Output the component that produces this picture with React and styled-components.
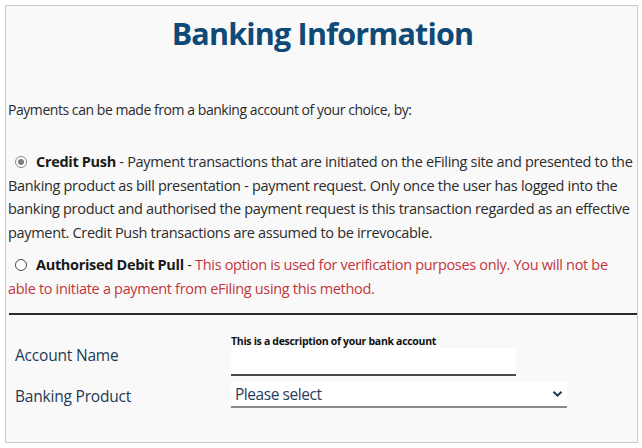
import React from "react";
import styled, { createGlobalStyle } from "styled-components";

const GlobalStyle = createGlobalStyle`
  html, body { margin: 0; padding: 0; background: #ffffff; }
  body { font-family: "Open Sans", "Noto Sans", sans-serif; }
  * { box-sizing: border-box; }
`;

const Panel = styled.section`
  margin: 5px 0 0 5px;
  width: 633px;
  height: 438px;
  border: 1px solid #c9c9c9;
  background: #f9f9f9;
  padding: 6px 0 0 2px;
  color: #2b2b2b;
`;

const Title = styled.h1`
  margin: 0;
  text-align: center;
  font-weight: 700;
  font-size: 30.5px;
  letter-spacing: -0.8px;
  line-height: 42px;
  color: #0f4a77;
`;

const Intro = styled.p`
  margin: 44px 0 0 0;
  font-size: 14px;
  letter-spacing: -0.45px;
  line-height: 24px;
`;

const Option = styled.p`
  margin: ${p => p.$gap}px 0 0 0;
  font-size: 14.5px;
  letter-spacing: -0.32px;
  line-height: 23.5px;
  white-space: nowrap;
`;

const Radio = styled.span`
  display: inline-block;
  position: relative;
  width: 12px;
  height: 12px;
  margin: 0 9px 0 7px;
  border-radius: 50%;
  border: 1px solid ${p => p.$checked ? "#8a8a8a" : "#4a4a4a"};
  background: #ffffff;
  vertical-align: -1px;
  &::after {
    content: "";
    display: ${p => p.$checked ? "block" : "none"};
    position: absolute;
    left: 2px;
    top: 2px;
    width: 6px;
    height: 6px;
    border-radius: 50%;
    background: #7d7d7d;
  }
`;

const OptionName = styled.strong`
  font-weight: 700;
  color: #1a1a1a;
`;

const Warning = styled.span`
  color: #c2363f;
`;

const Divider = styled.hr`
  margin: 13px 0 0 1px;
  border: 0;
  border-top: 2px solid #2a2a2a;
`;

const Form = styled.div`
  display: flex;
  flex-direction: column;
  gap: 6px;
  margin-top: 19px;
  padding-left: 7px;
`;

const FieldRow = styled.div`
  display: flex;
  align-items: flex-start;
`;

const Label = styled.label`
  width: 216px;
  flex: none;
  font-size: 15.5px;
  letter-spacing: -0.2px;
  line-height: 22px;
  color: #1e3a56;
  padding-top: ${p => p.$top}px;
`;

const FieldBox = styled.div`
  display: flex;
  flex-direction: column;
`;

const Hint = styled.span`
  font-size: 10.5px;
  font-weight: 700;
  letter-spacing: -0.3px;
  line-height: 14px;
  color: #111;
`;

const TextInput = styled.div`
  width: 285px;
  height: 28px;
  background: #ffffff;
  border-bottom: 2px solid #4a4a4a;
`;

const Select = styled.div`
  width: 336px;
  height: 26px;
  display: flex;
  align-items: center;
  justify-content: space-between;
  padding: 0 4px 1px 4px;
  background: #ffffff;
  border-bottom: 2px solid #8a8a8a;
  font-size: 15.5px;
  letter-spacing: -0.45px;
  color: #1f3d5b;
`;

const Chevron = () => (
  <svg width="11" height="8" viewBox="0 0 11 8" aria-hidden="true">
    <path d="M1.5 1.8 L5.5 5.6 L9.5 1.8" fill="none" stroke="#1f3550" strokeWidth="2" />
  </svg>
);

export default function App() {
  return (
    <>
      <GlobalStyle />
      <Panel>
        <Title>Banking Information</Title>
        <Intro>Payments can be made from a banking account of your choice, by:</Intro>
        <Option $gap={28}>
          <Radio $checked />
          <OptionName>Credit Push</OptionName> - Payment transactions that are initiated on the eFiling site and presented to the
          <br />
          Banking product as bill presentation - payment request. Only once the user has logged into the
          <br />
          banking product and authorised the payment request is this transaction regarded as an effective
          <br />
          payment. Credit Push transactions are assumed to be irrevocable.
        </Option>
        <Option $gap={9}>
          <Radio />
          <OptionName>Authorised Debit Pull</OptionName> -{" "}
          <Warning>
            This option is used for verification purposes only. You will not be
            <br />
            able to initiate a payment from eFiling using this method.
          </Warning>
        </Option>
        <Divider />
        <Form>
          <FieldRow>
            <Label $top={10}>Account Name</Label>
            <FieldBox>
              <Hint>This is a description of your bank account</Hint>
              <TextInput />
            </FieldBox>
          </FieldRow>
          <FieldRow>
            <Label $top={3}>Banking Product</Label>
            <Select>
              <span>Please select</span>
              <Chevron />
            </Select>
          </FieldRow>
        </Form>
      </Panel>
    </>
  );
}
